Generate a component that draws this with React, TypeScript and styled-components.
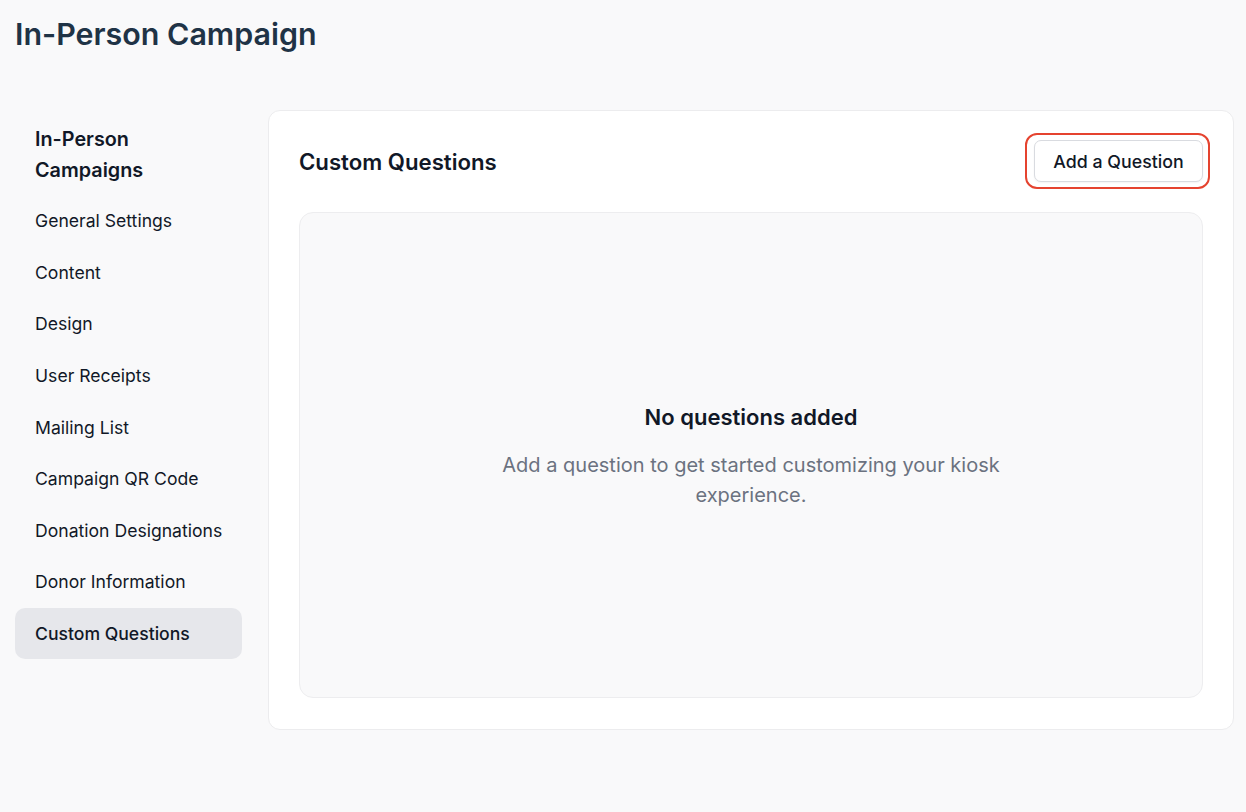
import React from 'react';
import styled, { createGlobalStyle } from 'styled-components';

const GlobalStyle = createGlobalStyle`
  html, body {
    margin: 0;
    padding: 0;
    background: #f9f9fa;
    font-family: Inter, "Noto Sans", sans-serif;
    color: #111827;
  }
  * {
    box-sizing: border-box;
  }
`;

const Page = styled.div`
  display: flex;
  flex-direction: column;
  width: 1246px;
  min-height: 812px;
  padding: 14px 12px 0 15px;
`;

const PageTitle = styled.h1`
  margin: 0;
  height: 40px;
  font-size: 30.4px;
  line-height: 40px;
  font-weight: 600;
  color: #1f3346;
`;

const Layout = styled.div`
  display: flex;
  align-items: flex-start;
  gap: 26px;
  margin-top: 56px;
`;

const Sidebar = styled.nav`
  display: flex;
  flex-direction: column;
  width: 227px;
  padding-top: 14px;
`;

const SidebarHeading = styled.h2`
  margin: 0 0 9px;
  padding-left: 20px;
  font-size: 19.8px;
  line-height: 31px;
  font-weight: 600;
  color: #111827;
`;

const NavItem = styled.a<{ $active?: boolean }>`
  display: flex;
  align-items: center;
  height: 51.6px;
  padding-left: 20px;
  border-radius: 10px;
  font-size: 17.6px;
  color: #111827;
  text-decoration: none;
  background: ${(p) => (p.$active ? '#e6e7eb' : 'transparent')};
  font-weight: ${(p) => (p.$active ? 500 : 400)};
  cursor: pointer;
`;

const Card = styled.section`
  display: flex;
  flex-direction: column;
  gap: 30px;
  width: 966px;
  height: 620px;
  padding: 29px 30px 31px 30px;
  background: #ffffff;
  border: 1px solid #ececee;
  border-radius: 12px;
`;

const CardHeader = styled.div`
  display: flex;
  align-items: center;
  justify-content: space-between;
  height: 42px;
`;

const CardTitle = styled.h3`
  margin: 0;
  font-size: 22.2px;
  font-weight: 600;
  color: #111827;
`;

const Highlight = styled.div`
  position: relative;
  &::after {
    content: '';
    position: absolute;
    top: -7px;
    bottom: -7px;
    left: -9px;
    right: -7px;
    border: 2.5px solid #e5432f;
    border-radius: 12px;
    pointer-events: none;
  }
`;

const OutlineButton = styled.button`
  height: 42px;
  width: 169px;
  padding: 0 16px;
  background: #ffffff;
  border: 1.5px solid #d9dbe0;
  border-radius: 7px;
  font-family: Inter, "Noto Sans", sans-serif;
  font-size: 17.8px;
  font-weight: 500;
  color: #111827;
  box-shadow: 0 1px 2px rgba(0, 0, 0, 0.05);
  cursor: pointer;
`;

const EmptyState = styled.div`
  flex: 1;
  display: flex;
  flex-direction: column;
  align-items: center;
  justify-content: center;
  background: #f9f9fa;
  border: 1px solid #ededef;
  border-radius: 14px;
  padding-top: 2px;
`;

const EmptyTitle = styled.h4`
  margin: 0 0 18px;
  font-size: 22px;
  line-height: 30px;
  font-weight: 600;
  color: #111827;
`;

const EmptyText = styled.p`
  margin: 0;
  max-width: 530px;
  text-align: center;
  font-size: 20px;
  line-height: 30px;
  color: #6b7280;
`;

const navItems = [
  'General Settings',
  'Content',
  'Design',
  'User Receipts',
  'Mailing List',
  'Campaign QR Code',
  'Donation Designations',
  'Donor Information',
  'Custom Questions',
];

const App = () => {
  return (
    <Page>
      <GlobalStyle />
      <PageTitle>In-Person Campaign</PageTitle>
      <Layout>
        <Sidebar>
          <SidebarHeading>
            In-Person
            <br />
            Campaigns
          </SidebarHeading>
          {navItems.map((item) => (
            <NavItem key={item} $active={item === 'Custom Questions'}>
              {item}
            </NavItem>
          ))}
        </Sidebar>
        <Card>
          <CardHeader>
            <CardTitle>Custom Questions</CardTitle>
            <Highlight>
              <OutlineButton>Add a Question</OutlineButton>
            </Highlight>
          </CardHeader>
          <EmptyState>
            <EmptyTitle>No questions added</EmptyTitle>
            <EmptyText>
              Add a question to get started customizing your kiosk experience.
            </EmptyText>
          </EmptyState>
        </Card>
      </Layout>
    </Page>
  );
};

export default App;
